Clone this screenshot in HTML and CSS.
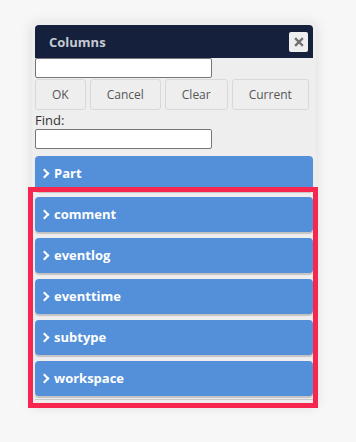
FILE: index.html
```html
<!DOCTYPE html>
<html lang="en">
<head>
    <meta charset="UTF-8">
    <meta name="viewport" content="width=device-width, initial-scale=1.0">
    <title>Columns</title>
    <link rel="stylesheet" href="styles.css">
</head>
<body>
    <div class="panel">
        <div class="panel-header">
            <span class="panel-title">Columns</span>
            <button class="close-btn" title="Close">
                <svg width="10" height="10" viewBox="0 0 10 10"><path d="M2 2 L8 8 M8 2 L2 8" stroke="#707070" stroke-width="2.4" stroke-linecap="square"/></svg>
            </button>
        </div>
        <input type="text" class="text-input">
        <div class="actions">
            <button class="btn">OK</button>
            <button class="btn">Cancel</button>
            <button class="btn">Clear</button>
            <button class="btn">Current</button>
        </div>
        <label class="find-label">Find:</label>
        <input type="text" class="text-input">

        <div class="fields">
            <div class="field field-top"><span class="chev"></span>Part</div>
            <div class="selection">
                <div class="field"><span class="chev"></span>comment</div>
                <div class="field"><span class="chev"></span>eventlog</div>
                <div class="field"><span class="chev"></span>eventtime</div>
                <div class="field"><span class="chev"></span>subtype</div>
                <div class="field"><span class="chev"></span>workspace</div>
            </div>
        </div>
    </div>
</body>
</html>
```

FILE: styles.css
```css
html, body {
    min-height: 100%;
}
body {
    margin: 0;
    padding-bottom: 30px;
    background-color: #f7f7f7;
    font-family: "Open Sans", sans-serif;
    font-size: 13px;
    color: #333;
}
.panel {
    width: 278px;
    margin: 22px 0 0 32px;
    padding: 3px 3px 4px 3px;
    background-color: #eeeeee;
    box-shadow: 0 2px 12px rgba(0, 0, 0, 0.12);
}
.panel-header {
    display: flex;
    align-items: center;
    justify-content: space-between;
    height: 33px;
    padding: 0 5px 0 14px;
    background-color: #14203c;
    border-radius: 4px 4px 0 0;
}
.panel-title {
    color: #c6cbd4;
    font-weight: bold;
    font-size: 13px;
}
.close-btn {
    width: 19px;
    height: 20px;
    padding: 0;
    border: none;
    border-radius: 2px;
    background-color: #eeeeee;
    display: flex;
    align-items: center;
    justify-content: center;
}
.text-input {
    display: block;
    box-sizing: border-box;
    width: 177px;
    height: 20px;
    margin: 0;
    border: 1px solid #767676;
    border-radius: 2px;
    background: #fff;
}
.actions {
    display: flex;
    gap: 4px;
    margin: 1px 0 2px 0;
}
.btn {
    height: 31px;
    padding: 0 16px;
    border: 1px solid #d8d8d8;
    border-radius: 3px;
    background-color: #eeeeee;
    color: #555;
    font-family: "Open Sans", sans-serif;
    font-size: 12px;
}
.find-label {
    display: block;
    line-height: 17px;
    font-size: 13px;
}
.fields {
    margin-top: 7px;
    display: flex;
    flex-direction: column;
    gap: 6px;
}
.selection {
    position: relative;
    display: flex;
    flex-direction: column;
    gap: 6px;
    padding-bottom: 3px;
    border-bottom: 1px solid #c9c9c9;
}
.selection::after {
    content: "";
    position: absolute;
    top: -10px;
    left: -7px;
    right: -5px;
    bottom: -9px;
    border: 5px solid #f7264f;
}
.field {
    display: flex;
    align-items: center;
    height: 35px;
    padding-left: 7px;
    background-color: #5390d9;
    border-radius: 4px;
    box-shadow: 0 2px 1px rgba(0, 0, 0, 0.18);
    color: #fff;
    font-weight: bold;
    font-size: 13px;
    line-height: 33px;
}
.chev {
    width: 5px;
    height: 5px;
    margin: 0 6px 0 -1px;
    border-top: 2px solid #fff;
    border-right: 2px solid #fff;
    transform: rotate(45deg);
}
```
